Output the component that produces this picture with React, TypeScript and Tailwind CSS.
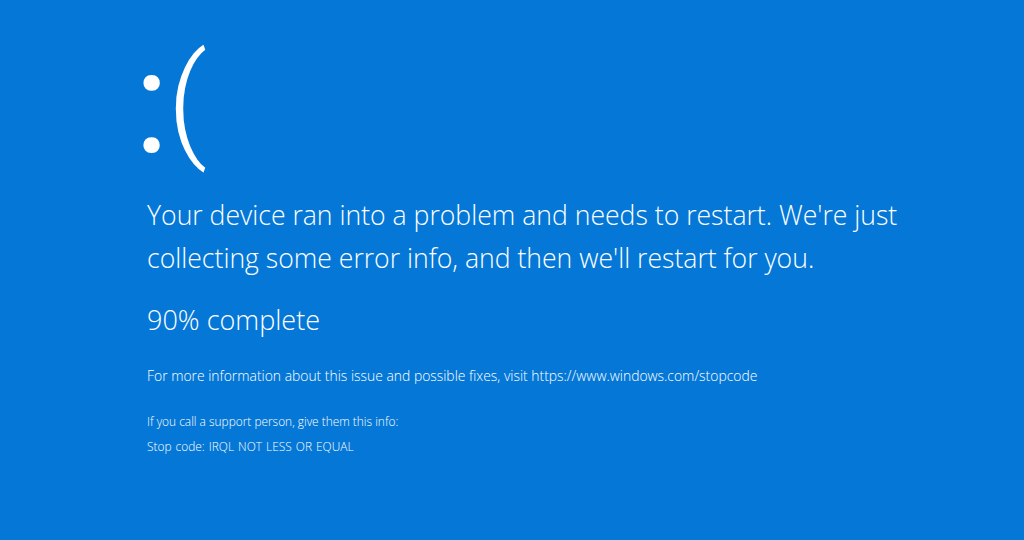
export default function App() {
  return (
    <div className="w-[1024px] h-[540px] bg-[#0578d7] text-white overflow-hidden font-['Open_Sans',sans-serif] font-light">
      <div className="pl-[147px] pt-[13px]">
        <div className="flex items-start -ml-[13px] font-['Roboto',sans-serif]">
          <span className="block text-[145px] leading-[160px] mt-[9px] font-normal">:</span>
          <span className="block text-[125px] leading-[160px] mt-[9px] -ml-[2px] font-light">(</span>
        </div>
        <div className="mt-[12px] text-[26.6px] leading-[43px]">
          <div>Your device ran into a problem and needs to restart. We're just</div>
          <div>collecting some error info, and then we'll restart for you.</div>
        </div>
        <div className="mt-[19px] text-[27px] leading-[42px]">90% complete</div>
        <div className="mt-[25px] text-[13.9px] leading-[20px]">
          For more information about this issue and possible fixes, visit https://www.windows.com/stopcode
        </div>
        <div className="mt-[23px] text-[11.9px] leading-[25px]">
          <div>If you call a support person, give them this info:</div>
          <div className="[word-spacing:1px]">Stop code: IRQL NOT LESS OR EQUAL</div>
        </div>
      </div>
    </div>
  );
}
